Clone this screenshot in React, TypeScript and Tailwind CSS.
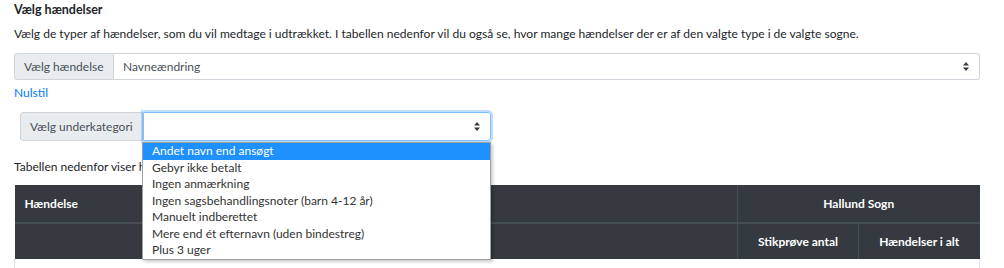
import React from "react";

const options = [
  "Andet navn end ansøgt",
  "Gebyr ikke betalt",
  "Ingen anmærkning",
  "Ingen sagsbehandlingsnoter (barn 4-12 år)",
  "Manuelt indberettet",
  "Mere end ét efternavn (uden bindestreg)",
  "Plus 3 uger",
];

const Arrows: React.FC = () => (
  <svg width="6" height="9" viewBox="0 0 6 9" className="text-[#343a40]">
    <path d="M3 0L6 3.5H0z M3 9L0 5.5H6z" fill="currentColor" />
  </svg>
);

const App: React.FC = () => {
  return (
    <div
      className="w-[1004px] h-[268px] overflow-hidden bg-white text-[12px] text-[#212529]"
      style={{ fontFamily: '"Lato", sans-serif' }}
    >
      <div className="px-[14px] pt-[1px]">
        <h5 className="font-bold text-[12.5px] leading-[16px] mt-[1px]">Vælg hændelser</h5>
        <p className="mt-[8px] leading-[16px] text-[12.05px]">
          Vælg de typer af hændelser, som du vil medtage i udtrækket. I tabellen nedenfor vil du også se, hvor mange
          hændelser der er af den valgte type i de valgte sogne.
        </p>

        <div className="mt-[11px] flex w-[966px] h-[27px]">
          <div className="flex items-center whitespace-nowrap w-[100px] px-[9px] bg-[#e9ecef] border border-[#ced4da] rounded-l-[3px] text-[#495057]">
            Vælg hændelse
          </div>
          <div className="flex-1 flex items-center justify-between pl-[9px] pr-[10px] border border-l-0 border-[#ced4da] rounded-r-[3px] text-[#495057]">
            <span>Navneændring</span>
            <Arrows />
          </div>
        </div>

        <a className="block mt-[5px] text-[#007bff] leading-[16px]">Nulstil</a>

        <div className="relative ml-[6px] mt-[11px] flex w-[471px] h-[29px]">
          <div className="flex items-center whitespace-nowrap w-[123px] px-[9px] bg-[#e9ecef] border border-[#ced4da] rounded-l-[3px] text-[#495057]">
            Vælg underkategori
          </div>
          <div className="flex-1 flex items-center justify-end pr-[10px] border border-[#80bdff] rounded-r-[3px] shadow-[0_0_0_2px_rgba(0,123,255,0.25)]">
            <Arrows />
          </div>

          <ul className="absolute left-[122px] top-[30px] w-[349px] bg-white border border-[#a0a0a0] shadow-[2px_2px_3px_rgba(0,0,0,0.2)] z-10 text-[12px] leading-[16.5px] text-[#333]">
            {options.map((o, i) => (
              <li
                key={o}
                className={i === 0 ? "bg-[#1e90ff] text-white pl-[9px]" : "pl-[9px]"}
              >
                {o}
              </li>
            ))}
          </ul>
        </div>

        <p className="mt-[18px] leading-[16px]">Tabellen nedenfor viser hvor mange hændelser der er i de valgte sogne.</p>

        <table className="mt-[10px] w-[966px] border-collapse text-white font-bold">
          <thead className="bg-[#343a40]">
            <tr className="h-[38px]">
              <th className="text-left pl-[10px] border-b-2 border-[#454d55] font-bold">Hændelse</th>
              <th colSpan={2} className="w-[242px] border-l border-b-2 border-[#454d55] text-center font-bold">
                Hallund Sogn
              </th>
            </tr>
            <tr className="h-[36px]">
              <th></th>
              <th className="w-[121px] border-l border-[#454d55] text-center font-bold">Stikprøve antal</th>
              <th className="w-[121px] border-l border-[#454d55] text-center font-bold">Hændelser i alt</th>
            </tr>
          </thead>
          <tbody>
            <tr className="h-[20px]">
              <td className="border-l border-r border-[#dee2e6]" colSpan={3}></td>
            </tr>
          </tbody>
        </table>
      </div>
    </div>
  );
};

export default App;
